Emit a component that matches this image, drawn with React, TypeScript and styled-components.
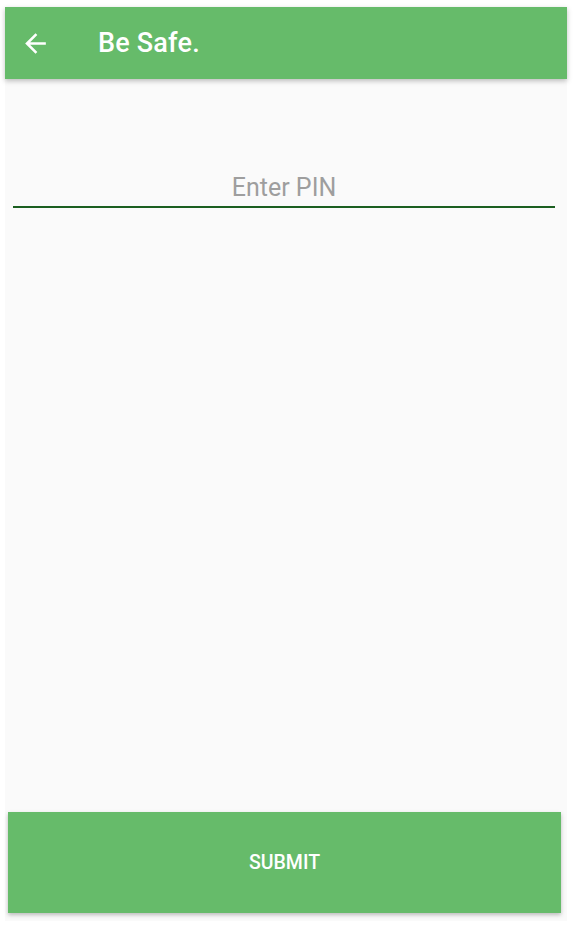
import React from "react";
import styled, { createGlobalStyle } from "styled-components";

const Global = createGlobalStyle`
  html, body { margin: 0; padding: 0; background: #ffffff; }
  body { font-family: Roboto, "Noto Sans", sans-serif; }
`;

const Screen = styled.div`
  box-sizing: border-box;
  margin: 7px 7px 0 5px;
  height: 914px;
  background: #fafafa;
  display: flex;
  flex-direction: column;
`;

const Toolbar = styled.header`
  height: 72px;
  flex: none;
  background: #66bb6a;
  display: flex;
  align-items: center;
  box-shadow: 0 2px 5px rgba(0, 0, 0, 0.25);
  position: relative;
  z-index: 1;
`;

const BackButton = styled.button`
  width: 31px;
  height: 31px;
  margin-left: 15px;
  padding: 0;
  border: none;
  background: transparent;
  display: flex;
  align-items: center;
  justify-content: center;
`;

const Title = styled.h1`
  margin: 0 0 0 47px;
  font-family: Roboto, sans-serif;
  font-weight: 500;
  font-size: 27px;
  color: #ffffff;
  letter-spacing: 0.2px;
`;

const Body = styled.main`
  flex: 1;
  display: flex;
  flex-direction: column;
`;

const Field = styled.div`
  margin: 91px 12px 0 8px;
  border-bottom: 2px solid #1b5e20;
  display: flex;
  justify-content: center;
  padding-bottom: 2px;
`;

const PinInput = styled.input`
  width: 100%;
  border: none;
  outline: none;
  background: transparent;
  text-align: center;
  font-family: Roboto, sans-serif;
  font-size: 25px;
  color: #212121;
  padding: 0;
  height: 34px;
  &::placeholder { color: #9e9e9e; }
`;

const Spacer = styled.div`
  flex: 1;
`;

const SubmitButton = styled.button`
  margin: 0 6px 8px 3px;
  height: 101px;
  border: none;
  background: #66bb6a;
  color: #ffffff;
  font-family: Roboto, sans-serif;
  font-weight: 500;
  font-size: 19.5px;
  text-transform: uppercase;
  box-shadow: 0 2px 4px rgba(0, 0, 0, 0.25);
`;

export default function App() {
  return (
    <>
      <Global />
      <Screen>
        <Toolbar>
          <BackButton aria-label="Back">
            <svg width="31" height="31" viewBox="0 0 24 24" fill="#ffffff">
              <path d="M20 11H7.83l5.59-5.59L12 4l-8 8 8 8 1.41-1.41L7.83 13H20v-2z" />
            </svg>
          </BackButton>
          <Title>Be Safe.</Title>
        </Toolbar>
        <Body>
          <Field>
            <PinInput type="password" placeholder="Enter PIN" />
          </Field>
          <Spacer />
          <SubmitButton>Submit</SubmitButton>
        </Body>
      </Screen>
    </>
  );
}
